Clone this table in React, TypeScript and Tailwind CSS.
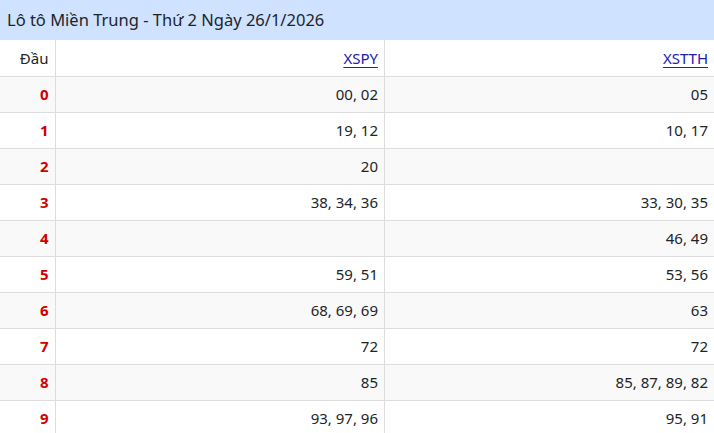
import React from "react";

const rows: [string, string, string][] = [
  ["0", "00, 02", "05"],
  ["1", "19, 12", "10, 17"],
  ["2", "20", ""],
  ["3", "38, 34, 36", "33, 30, 35"],
  ["4", "", "46, 49"],
  ["5", "59, 51", "53, 56"],
  ["6", "68, 69, 69", "63"],
  ["7", "72", "72"],
  ["8", "85", "85, 87, 89, 82"],
  ["9", "93, 97, 96", "95, 91"],
];

export default function App() {
  return (
    <div className="w-[714px] h-[433px] overflow-hidden bg-white text-[#212529] font-['Noto_Sans',sans-serif]">
      <div className="h-10 bg-[#cfe2ff] px-[7px] flex items-center text-[16.5px]">
        Lô tô Miền Trung - Thứ 2 Ngày 26/1/2026
      </div>
      <table className="w-full table-fixed border-collapse text-[15px]">
        <colgroup>
          <col className="w-[55px]" />
          <col />
          <col />
        </colgroup>
        <thead>
          <tr className="h-9">
            <th className="border-b border-r border-[#dddddd] px-1.5 text-right font-normal">Đầu</th>
            <th className="border-b border-r border-[#dddddd] px-1.5 text-right font-normal">
              <a href="#" className="text-[#2020b0] underline underline-offset-[3px]">XSPY</a>
            </th>
            <th className="border-b border-[#dddddd] px-1.5 text-right font-normal">
              <a href="#" className="text-[#2020b0] underline underline-offset-[3px]">XSTTH</a>
            </th>
          </tr>
        </thead>
        <tbody>
          {rows.map(([d, a, b], i) => (
            <tr key={d} className={i % 2 === 0 ? "h-9 bg-[#f9f9f9]" : "h-9 bg-white"}>
              <td className="border-b border-r border-[#dddddd] px-1.5 text-right font-bold text-[#d00000]">{d}</td>
              <td className="border-b border-r border-[#dddddd] px-1.5 text-right">{a}</td>
              <td className="border-b border-[#dddddd] px-1.5 text-right">{b}</td>
            </tr>
          ))}
        </tbody>
      </table>
    </div>
  );
}
